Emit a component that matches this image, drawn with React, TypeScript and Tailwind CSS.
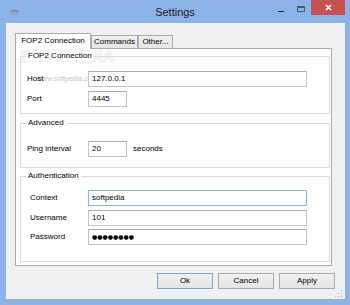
import React from "react";

function Field({ w, focused, children }: { w: string; focused?: boolean; children?: React.ReactNode }) {
  return (
    <div
      className={
        "relative h-[16px] flex items-center pl-[3px] bg-white border text-[8px] leading-[10px] text-black " +
        w +
        (focused ? " border-[#7eb4ea]" : " border-[#c2c4c8] border-t-[#abadb3]")
      }
    >
      {children}
    </div>
  );
}

function Btn({ label, def }: { label: string; def?: boolean }) {
  return (
    <div
      className={
        "w-[56px] h-[16px] flex items-center justify-center text-[8px] leading-[10px] bg-linear-to-b from-[#f0f0f0] to-[#e5e5e5] border " +
        (def ? "border-[#6fa9e0]" : "border-[#acacac]")
      }
    >
      {label}
    </div>
  );
}

export default function App() {
  return (
    <div className="w-[350px] h-[305px] bg-[#8cb3e8] flex flex-col overflow-hidden font-['Liberation_Sans',Arial,sans-serif] text-black">
      {/* Title bar */}
      <div className="h-[23px] grid grid-cols-[1fr_auto_1fr] items-start">
        <div className="pl-[10px] pt-[9px]">
          <svg width="9" height="6" viewBox="0 0 9 6">
            <path d="M0.5 2.6 C0.5 0.4 8.5 0.4 8.5 2.6 L8.5 3.2 L6.6 3.2 L6.2 2.2 L2.8 2.2 L2.4 3.2 L0.5 3.2 Z" fill="#7b7f86" />
            <path d="M2.2 3.6 L6.8 3.6 L8 5.6 L1 5.6 Z" fill="#9a9ea5" />
          </svg>
        </div>
        <div className="pt-[5px] text-[11px] leading-[14px] text-[#1b1b1b]">Settings</div>
        <div className="flex justify-end items-start pr-[5px]">
          <div className="w-[19px] h-[15px] pl-[5px] pt-[11px]">
            <div className="w-[6px] h-[1px] bg-[#1e2633]" />
          </div>
          <div className="w-[19px] h-[15px] pl-[5px] pt-[6px]">
            <div className="w-[8px] h-[6px] border border-t-2 border-[#4b5c78]" />
          </div>
          <div className="w-[34px] h-[15px] bg-[#c75050] flex items-center justify-center">
            <svg width="7" height="7" viewBox="0 0 7 7">
              <path d="M1 1 L6 6 M6 1 L1 6" stroke="#ffffff" strokeWidth="1.6" />
            </svg>
          </div>
        </div>
      </div>

      {/* Client */}
      <div className="relative flex-1 ml-[6px] mr-[5px] mb-[6px] bg-[#f0f0f0] flex flex-col pt-[10px] pl-[9px]">
        {/* Tabs */}
        <div className="flex items-end h-[15px] text-[8px] leading-[10px]">
          <div className="relative z-10 w-[76px] h-[16px] -mb-[1px] pb-[2px] bg-white border border-b-0 border-[#acacac] flex items-center justify-center">
            FOP2 Connection
          </div>
          <div className="w-[47px] h-[13px] bg-linear-to-b from-[#f0f0f0] to-[#e5e5e5] border border-b-0 border-[#acacac] flex items-center justify-center">
            Commands
          </div>
          <div className="w-[35px] h-[13px] bg-linear-to-b from-[#f0f0f0] to-[#e5e5e5] border border-b-0 border-[#acacac] flex items-center justify-center">
            Other...
          </div>
        </div>

        {/* Panel */}
        <div className="relative w-[317px] h-[218px] bg-white border border-[#acacac] pt-[7px] pl-[4px] pr-[1px] flex flex-col text-[8px] leading-[10px]">
          <div className="absolute -top-[1px] left-[4px] text-[17px] leading-[17px] font-bold tracking-[-0.3px] text-[#fbfbfb] [-webkit-text-stroke:0.6px_#e4e4e4]">
            SOFTPEDIA
          </div>

          {/* Group 1 */}
          <div className="relative border border-[#dcdcdc] pt-[14px] pb-[6px]">
            <div className="absolute -top-[6px] left-[5px] px-[2px] bg-white text-[8px] leading-[10px]">FOP2 Connection</div>
            <div className="absolute top-[18px] left-[16px] text-[7px] leading-[8px] text-[#c4c4c4]">www.softpedia.com</div>
            <div className="relative flex items-center h-[16px] pl-[6px]">
              <div className="w-[61px]">Host</div>
              <Field w="w-[219px]">127.0.0.1</Field>
            </div>
            <div className="relative flex items-center h-[16px] pl-[6px] mt-[4px]">
              <div className="w-[61px]">Port</div>
              <Field w="w-[39px]">4445</Field>
            </div>
          </div>

          {/* Group 2 */}
          <div className="relative border border-[#dcdcdc] mt-[9px] pt-[17px] pb-[10px]">
            <div className="absolute -top-[6px] left-[5px] px-[2px] bg-white text-[8px] leading-[10px]">Advanced</div>
            <div className="relative flex items-center h-[16px] pl-[6px]">
              <div className="w-[61px]">Ping interval</div>
              <Field w="w-[39px]">20</Field>
              <div className="ml-[6px]">seconds</div>
            </div>
          </div>

          {/* Group 3 */}
          <div className="relative border border-[#dcdcdc] mt-[8px] pt-[13px] pb-[16px]">
            <div className="absolute -top-[6px] left-[5px] px-[2px] bg-white text-[8px] leading-[10px]">Authentication</div>
            <div className="relative flex items-center h-[16px] pl-[9px]">
              <div className="w-[58px]">Context</div>
              <Field w="w-[219px]" focused>
                softpedia
              </Field>
            </div>
            <div className="relative flex items-center h-[16px] pl-[9px] mt-[4px]">
              <div className="w-[58px]">Username</div>
              <Field w="w-[219px]">101</Field>
            </div>
            <div className="relative flex items-center h-[16px] pl-[9px] mt-[3px]">
              <div className="w-[58px]">Password</div>
              <Field w="w-[219px]">
                <span className="font-['DejaVu_Sans',sans-serif] text-[6px] leading-[8px]">●●●●●●●●</span>
              </Field>
            </div>
          </div>
        </div>

        {/* Buttons */}
        <div className="mt-[7px] flex justify-end gap-[5px] pr-[10px]">
          <Btn label="Ok" def />
          <Btn label="Cancel" />
          <Btn label="Apply" />
        </div>

        {/* Grip */}
        <div className="absolute right-[2px] bottom-[1px]">
          <svg width="8" height="8" viewBox="0 0 8 8">
            <rect x="6" y="0" width="1.2" height="1.2" fill="#b8b8b8" />
            <rect x="3" y="3" width="1.2" height="1.2" fill="#b8b8b8" />
            <rect x="6" y="3" width="1.2" height="1.2" fill="#b8b8b8" />
            <rect x="0" y="6" width="1.2" height="1.2" fill="#b8b8b8" />
            <rect x="3" y="6" width="1.2" height="1.2" fill="#b8b8b8" />
            <rect x="6" y="6" width="1.2" height="1.2" fill="#b8b8b8" />
          </svg>
        </div>
      </div>
    </div>
  );
}
